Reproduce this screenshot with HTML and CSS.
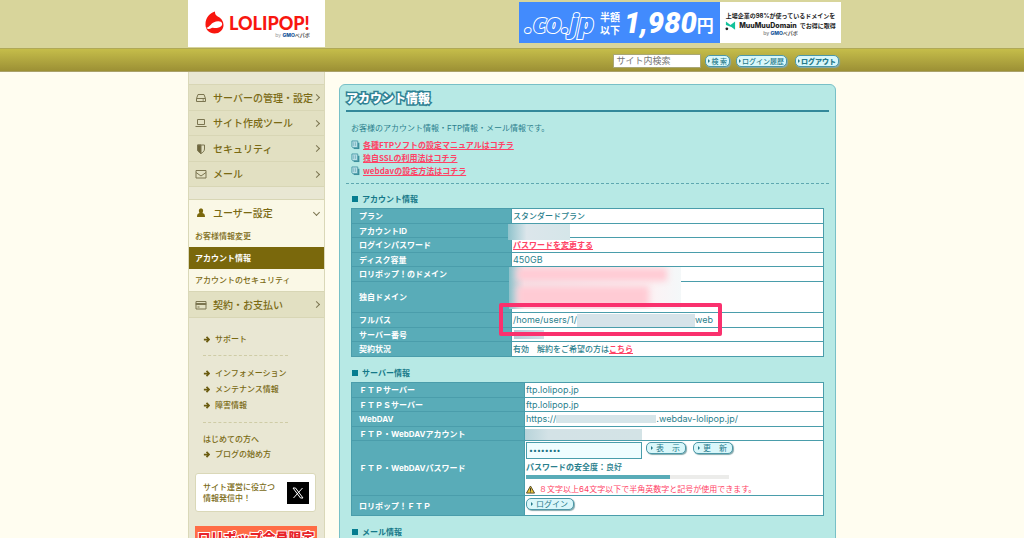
FILE: index.html
```
<!DOCTYPE html>
<html lang="ja">
<head>
<meta charset="utf-8">
<title>アカウント情報 - LOLIPOP!</title>
<link rel="stylesheet" href="styles.css">
</head>
<body>
<div class="page">
  <header class="header">
    <div class="wrap header-inner">
      <a class="logo" href="#">
        <svg class="logo-mark" viewBox="0 0 20 24" aria-hidden="true"><path d="M10.500 .5C10.500 3 11 4 13 5.500C17 7.500 19.500 10.500 19.500 14.500C19.500 19.500 15.500 23.500 10 23.500C4.500 23.500 .5 19.500 .5 14C.5 7 5 2 10.500 .5Z" fill="#f8160f"/><path d="M1.500 17.500C4.500 17 6 13.500 9 12C13 10 17.500 10.500 18 13C18.500 15.500 16 17 13.500 17.500C10.500 18.500 8.500 16.500 6.500 18C5 19 3 19.500 1.500 17.500Z" fill="#fff"/></svg>
        <span class="logo-text"><span class="logo-name">LOLIPOP!</span><span class="by">by <b>GMO</b><i>ペパボ</i></span></span>
      </a>
      <a class="banner" href="#">
        <span class="banner-blue"><span class="cojp">.co.jp</span><span class="half">半額<br>以下</span><span class="price">1,980</span><span class="yen">円</span></span>
        <span class="banner-white">
          <span>上場企業の98%が使っているドメインを</span>
          <span class="muu"><svg viewBox="0 0 12 10" aria-hidden="true"><path d="M1 0L6 4L11 0V9L7 6L1 4Z" fill="#13c29b"/><circle cx="2" cy="8" r="1.500" fill="#222"/></svg><b>MuuMuuDomain</b><span>でお得に取得</span></span>
          <span class="by">by <b>GMO</b><i>ペパボ</i></span>
        </span>
      </a>
    </div>
  </header>
  <div class="toolbar">
    <form class="wrap tools">
      <input class="search" type="text" aria-label="サイト内検索" placeholder="サイト内検索">
      <button class="btn" type="button">検 索</button>
      <button class="btn history" type="button">ログイン履歴</button>
      <button class="btn logout" type="button">ログアウト</button>
    </form>
  </div>
  <div class="wrap columns">
    <aside class="sidebar">
      <nav class="nav">
        <a href="#"><svg viewBox="0 0 12 12"><path d="M1.500 6.500L3 2.500H9L10.500 6.500V9.500H1.500ZM1.500 6.500H10.500M7.500 8H9"/></svg><span>サーバーの管理・設定</span><i class="chev"></i></a>
        <a href="#"><svg viewBox="0 0 12 12"><path d="M2.500 7.500V2.500H9.500V7.500ZM.5 9.500H11.500"/></svg><span>サイト作成ツール</span><i class="chev"></i></a>
        <a href="#"><svg viewBox="0 0 12 12"><path d="M2.500 2H9.500V6C9.500 8.500 7.500 9.500 6 10.500C4.500 9.500 2.500 8.500 2.500 6Z"/><path class="solid" d="M6 2V10.500C4.500 9.500 2.500 8.500 2.500 6V2Z"/></svg><span>セキュリティ</span><i class="chev"></i></a>
        <a href="#"><svg viewBox="0 0 12 12"><path d="M1 2.500H11V10H1ZM1 4.500L6 8L11 4.500"/></svg><span>メール</span><i class="chev"></i></a>
      </nav>
      <nav class="nav lower">
        <a class="open" href="#"><svg viewBox="0 0 12 12"><path class="solid" d="M6 1.500C8.500 1.500 8.500 4 7.500 6C9 6.500 10 7 10 10H2C2 7 3 6.500 4.500 6C3.500 4 3.500 1.500 6 1.500Z"/></svg><span>ユーザー設定</span><i class="chev down"></i></a>
        <div class="sub">
          <a href="#">お客様情報変更</a>
          <a class="active" href="#">アカウント情報</a>
          <a href="#">アカウントのセキュリティ</a>
        </div>
        <a href="#"><svg viewBox="0 0 12 12"><path d="M1 2.500H11V10H1ZM2.500 8H4.500"/><path class="solid" d="M1 4.500H11V5.500H1Z"/></svg><span>契約・お支払い</span><i class="chev"></i></a>
      </nav>
      <div class="links">
        <div class="group"><a href="#"><svg viewBox="0 0 8 8"><path d="M1 4H6.500M4 1L7 4L4 7"/></svg>サポート</a></div>
        <div class="group"><a href="#"><svg viewBox="0 0 8 8"><path d="M1 4H6.500M4 1L7 4L4 7"/></svg>インフォメーション</a><a href="#"><svg viewBox="0 0 8 8"><path d="M1 4H6.500M4 1L7 4L4 7"/></svg>メンテナンス情報</a><a href="#"><svg viewBox="0 0 8 8"><path d="M1 4H6.500M4 1L7 4L4 7"/></svg>障害情報</a></div>
        <div class="group guide"><span>はじめての方へ</span><a href="#"><svg viewBox="0 0 8 8"><path d="M1 4H6.500M4 1L7 4L4 7"/></svg>ブログの始め方</a></div>
      </div>
      <a class="xbox" href="#"><span>サイト運営に役立つ<br>情報発信中！</span>
        <svg viewBox="0 0 22 22" aria-hidden="true"><path fill="#000" d="M0 0H22V22H0Z"/><path d="M6 6H8.500L16 16H13.500ZM15.500 6L6.500 16" fill="none" stroke="#fff"/></svg></a>
      <a class="promo" href="#">ロリポップ会員限定</a>
    </aside>
    <main class="panel">
      <h1>アカウント情報</h1>
      <div class="intro">
        <p>お客様のアカウント情報・FTP情報・メール情報です。</p>
        <ul>
          <li><svg viewBox="0 0 10 10"><path d="M3 2.500H9.300V9.500H3Z" fill="#3b8e9b"/><path d="M1 .5H7.500V8H2L1 7Z" fill="#b9dfe6" stroke="#4b9aa7"/><path d="M3 2V6M5 2V6" stroke="#7fb8c3"/></svg><a href="#">各種FTPソフトの設定マニュアルはコチラ</a></li>
          <li><svg viewBox="0 0 10 10"><path d="M3 2.500H9.300V9.500H3Z" fill="#3b8e9b"/><path d="M1 .5H7.500V8H2L1 7Z" fill="#b9dfe6" stroke="#4b9aa7"/><path d="M3 2V6M5 2V6" stroke="#7fb8c3"/></svg><a href="#">独自SSLの利用法はコチラ</a></li>
          <li><svg viewBox="0 0 10 10"><path d="M3 2.500H9.300V9.500H3Z" fill="#3b8e9b"/><path d="M1 .5H7.500V8H2L1 7Z" fill="#b9dfe6" stroke="#4b9aa7"/><path d="M3 2V6M5 2V6" stroke="#7fb8c3"/></svg><a href="#">webdavの設定方法はコチラ</a></li>
        </ul>
      </div>
      <section>
        <h2>アカウント情報</h2>
        <table class="account">
          <tr><th scope="row">プラン</th><td>スタンダードプラン</td></tr>
          <tr><th scope="row">アカウントID</th><td><span class="mask m-id"></span></td></tr>
          <tr><th scope="row">ログインパスワード</th><td><a href="#">パスワードを変更する</a></td></tr>
          <tr><th scope="row">ディスク容量</th><td class="latin">450GB</td></tr>
          <tr><th scope="row">ロリポップ！のドメイン</th><td><span class="mask m-domain"></span></td></tr>
          <tr class="tall"><th scope="row">独自ドメイン</th><td></td></tr>
          <tr><th scope="row">フルパス</th><td class="latin"><span class="path"><span>/home/users/1/</span><span class="hidden-part"></span><span>web</span></span><span class="marker"></span></td></tr>
          <tr><th scope="row">サーバー番号</th><td><span class="mask m-server"></span></td></tr>
          <tr><th scope="row">契約状況</th><td>有効　解約をご希望の方は<a href="#">こちら</a></td></tr>
        </table>
      </section>
      <section>
        <h2>サーバー情報</h2>
        <table class="server">
          <tr><th scope="row">ＦＴＰサーバー</th><td class="latin">ftp.lolipop.jp</td></tr>
          <tr><th scope="row">ＦＴＰＳサーバー</th><td class="latin">ftp.lolipop.jp</td></tr>
          <tr><th scope="row">WebDAV</th><td class="latin"><span class="path"><span>https://</span><span class="hidden-part host"></span><span>.webdav-lolipop.jp/</span></span></td></tr>
          <tr><th scope="row">ＦＴＰ・WebDAVアカウント</th><td><span class="mask m-ftp"></span></td></tr>
          <tr class="pass"><th scope="row"><label for="pw">ＦＴＰ・WebDAVパスワード</label></th><td>
            <div class="pw-row"><input id="pw" type="password" value="password"><button class="btn" type="button">表　示</button><button class="btn" type="button">更　新</button></div>
            <div class="strength"><b>パスワードの安全度：</b>良好</div>
            <div class="bar"><span></span></div>
            <div class="note"><svg viewBox="0 0 10 9" aria-hidden="true"><path d="M5 .6L9.500 8.500H.5Z" fill="#e8c43c" stroke="#4c4524"/><path d="M5 3V6M5 6.700V7.700" stroke="#222"/></svg><span>８文字以上64文字以下で半角英数字と記号が使用できます。</span></div>
          </td></tr>
          <tr class="login"><th scope="row">ロリポップ！ＦＴＰ</th><td><button class="btn" type="button">ログイン</button></td></tr>
        </table>
      </section>
      <section><h2>メール情報</h2></section>
    </main>
  </div>
</div>
</body>
</html>
```
FILE: styles.css
```
* { box-sizing: border-box; }
body {
  margin: 0;
  background: #fffdf0;
  color: #2b7f8d;
  font: 8px/14px Inter, "Noto Sans CJK JP", sans-serif;
}
a { color: inherit; text-decoration: none; }
i { font-style: normal; }
.page { height: 100vh; overflow: hidden; }
.wrap { max-width: 648px; margin: 0 auto; }

/* header */
.header { background: #d8d59b; }
.header-inner { display: flex; justify-content: space-between; align-items: flex-start; height: 48px; }
.logo { display: flex; align-items: flex-start; gap: 5px; width: 137px; height: 47px; padding: 11px 0 0 17px; background: #fff; }
.logo-mark { width: 19px; height: 23px; }
.logo-text { display: flex; flex-direction: column; align-items: flex-end; }
.logo-name { font: 900 18px/20px Lato, sans-serif; color: #f8160f; padding-top: 2px; }
.by { display: block; font-size: 5px; line-height: 5px; color: #999; }
.by b { color: #16569c; font-weight: 800; }
.by i { color: #555; font-weight: 700; }
.banner { display: flex; width: 322px; height: 41px; margin: 2px -5px 0 0; }
.banner-blue { display: flex; align-items: center; width: 201px; padding-left: 6px; background: #428bfd; color: #fff; white-space: nowrap; }
.cojp { flex: none; width: 75px; font: italic 800 26px/36px "Open Sans", sans-serif; color: #428bfd; -webkit-text-stroke: 2px #fff; paint-order: stroke fill; }
.half { flex: none; width: 22px; font: 700 10px/13px "Noto Sans CJK JP", sans-serif; }
.price { margin-left: 2px; font: italic 900 29px/40px Roboto, sans-serif; }
.yen { font: 700 17px/30px "Noto Sans CJK JP", sans-serif; padding-top: 5px; }
.banner-white { flex: 1; display: flex; flex-direction: column; align-items: center; padding-top: 9px; background: #fff; color: #222; font-size: 6px; line-height: 10px; font-weight: 700; white-space: nowrap; }
.banner-white svg { width: 11px; height: 10px; }
.muu { display: flex; align-items: center; gap: 3px; }
.muu b { font-size: 7px; font-weight: 800; }

/* toolbar */
.toolbar { height: 24px; background: linear-gradient(#c5bd4a, #9c9035); border-top: 1px solid #b0a957; border-bottom: 1px solid #aaa16a; }
.tools { display: flex; align-items: center; justify-content: flex-end; gap: 6px; height: 23px; }
.search { width: 88px; height: 14px; margin-right: -2px; padding: 0 2px; border: 1px solid #a9a777; background: #fff; font: 9px/12px "Noto Sans CJK JP", sans-serif; }
.search::placeholder { color: #757575; }
.btn {
  display: inline-flex; align-items: center; gap: 3px; height: 12px; padding: 0 5px 0 4px;
  border: 1px solid #4b98a8; border-radius: 5px; background: #d9f7fa; color: #267a8a;
  box-shadow: 1px 1px 1px #86a9ad; font: 8px/10px "Noto Sans CJK JP", sans-serif; white-space: nowrap;
}
.btn::before { content: ""; border-left: 2px solid #267a8a; border-top: 2px solid transparent; border-bottom: 2px solid transparent; }
.tools .btn { padding: 0 2px; gap: 1px; font-size: 7px; font-weight: 500; }
.tools .logout { margin: 0 -3px 0 2px; font-weight: 800; }

/* columns */
.columns { display: flex; align-items: flex-start; gap: 14px; }
.sidebar { width: 137px; min-height: 466px; padding-top: 12px; background: #e9e7d3; border: 1px solid #dad8b8; border-top: 0; color: #7a6a14; flex: none; }
.nav > a { display: flex; align-items: center; height: 25px; padding: 0 5px 0 6px; background: #e2e0c2; border-top: 1px solid #d8d6b5; font: 500 10px/14px "Noto Sans CJK JP", sans-serif; white-space: nowrap; }
.nav > a:nth-child(odd) { height: 26px; }
.nav svg { width: 12px; height: 12px; margin-right: 6px; fill: none; stroke: #7b7550; }
.nav svg .solid { fill: #6e663c; }
.nav .open svg { stroke: none; }
.nav .open .solid { fill: #7a680c; }
.chev { width: 5px; height: 5px; margin-left: auto; border: solid #7b7550; border-width: 1px 1px 0 0; transform: rotate(45deg); flex: none; }
.down { transform: rotate(135deg); }
.nav { border-bottom: 1px solid #d8d6b5; }
.lower { margin-top: 12px; }
.nav > .open { background: #faf8e6; }
.sub { background: #faf8e6; }
.sub a { display: block; padding: 0 6px; line-height: 22px; font-weight: 500; }
.sub .active { background: #7a680c; color: #fff; font-weight: 700; }
.links { padding: 5px 36px 0 14px; font-weight: 500; line-height: 16px; }
.group { padding: 8px 0; border-bottom: 1px dashed #cfcca6; }
.group + .group { padding: 9px 0; }
.links .guide { border: 0; padding: 9px 0 0; line-height: 15px; }
.links a { display: flex; align-items: center; gap: 5px; white-space: nowrap; }
.links svg { width: 7px; height: 7px; fill: none; stroke: #6b5c10; stroke-width: 2; }
.xbox { display: flex; align-items: center; justify-content: space-between; margin: 11px 8px 14px 6px; height: 39px; padding: 0 6px 0 7px; background: #fff; border: 1px solid #dad8b8; border-radius: 3px; line-height: 11px; font-weight: 500; white-space: nowrap; }
.xbox svg { width: 22px; height: 22px; flex: none; }
.promo { display: block; margin: 0 7px 0 6px; height: 24px; background: #ff6c45; color: #e8242b; text-align: center; white-space: nowrap; font: 900 13px/22px "Noto Sans CJK JP", sans-serif; -webkit-text-stroke: 2px #fff; paint-order: stroke fill; }

/* panel */
.panel { flex: 1; min-height: 480px; margin-top: 12px; padding: 0 6px; background: #b7e9e5; border: 1px solid #78c0c7; border-radius: 6px; }
h1 { margin: 0; padding: 4px 0 3px; border-bottom: 2px solid #33889a; color: #fff; font: 900 12px/18px "Noto Sans CJK JP", sans-serif; -webkit-text-stroke: 3px #2f8294; paint-order: stroke fill; }
.intro { padding: 9px 5px 6px; border-bottom: 1px dashed #5ea8b0; }
.intro p { margin: 0 0 3px; }
ul { margin: 0; padding: 0; list-style: none; font-family: "Noto Sans CJK JP", sans-serif; }
li { display: flex; align-items: center; gap: 3px; line-height: 13px; }
li svg { width: 9px; height: 10px; }
li a, td a { color: #ff4265; font-weight: 700; text-decoration: underline; }
section { padding: 0 5px; }
h2 { display: flex; align-items: center; gap: 4px; margin: 0; padding: 8px 0 2px 1px; color: #157888; font-size: 8px; line-height: 14px; font-weight: 700; }
section + section h2 { padding-top: 9px; }
h2::before { content: ""; width: 6px; height: 6px; background: #067d90; }
table { width: 100%; border-collapse: collapse; table-layout: fixed; }
th, td { position: relative; border: 1px solid #4a9dab; padding: 0; line-height: 12px; text-align: left; }
th { width: 160px; padding-left: 7px; background: #59acb8; color: #fff; font-weight: 700; }
td { padding-left: 1px; background: #fff; font-weight: 500; }
.latin { font-size: 9px; font-weight: 400; }
.server th { width: 173px; }
tr { height: 14px; }
tr:nth-child(odd) { height: 15px; }
tr.tall { height: 31px; }
.path { display: flex; align-items: center; }
.hidden-part { width: 118px; height: 13px; background: #d6e3e9; }
.host { width: 100px; height: 8px; background: #d6e5e9; }

/* blurred-out values and the highlight frame lie over the cells */
.mask { position: absolute; z-index: 1; overflow: hidden; }
.m-id { left: -4px; top: 0; width: 62px; height: 16px; background: linear-gradient(90deg, #8fc3cc, #dce6eb 30%, #d5e6e9); }
.m-domain { left: -3px; top: 0; width: 172px; height: 42px; background: linear-gradient(90deg, #8cc1ca, #f4e6eb 9%, #fbf3f5 85%, #f4f8f9); }
.m-domain::before, .m-domain::after { content: ""; position: absolute; left: 8px; background: #ffcbd4; filter: blur(3px); }
.m-domain::before { top: 1px; width: 150px; height: 13px; }
.m-domain::after { top: 19px; width: 132px; height: 21px; }
.m-server { left: 2px; top: 2px; width: 30px; height: 9px; background: linear-gradient(90deg, #b5ccd8, #d2dfe6); }
.m-ftp { left: 0; top: 2px; width: 117px; height: 11px; background: linear-gradient(90deg, #b8d4da, #d3e2e6 20%, #d3e3e6); }
.marker { position: absolute; z-index: 2; left: -13px; top: -10px; width: 223px; height: 33px; border: 4px solid #fa316e; border-radius: 2px; }

/* password row */
.pw-row { display: flex; gap: 4px; padding-top: 1px; }
.pw-row input { width: 116px; height: 17px; padding: 0 2px; border: 1px solid #4a9dab; background: #effdff; color: #176f80; font: 7px/14px Inter, sans-serif; }
.pw-row .btn + .btn { margin-left: 3px; }
.strength { line-height: 16px; }
.bar { width: 203px; height: 4px; background: #ececea; }
.bar span { display: block; width: 71%; height: 4px; background: #59acb8; }
.note { display: flex; align-items: center; gap: 4px; padding-top: 4px; color: #ff4265; font-weight: 400; white-space: nowrap; }
.note svg { width: 9px; height: 9px; }
tr.login { height: 20px; }
.login td { vertical-align: top; padding-top: 1px; }
```
